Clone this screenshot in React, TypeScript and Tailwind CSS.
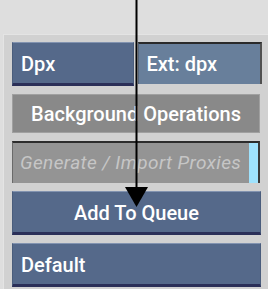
import React from "react";

const font = { fontFamily: 'Roboto, "Liberation Sans", Arial, sans-serif' };

function BlueButton({ label, center }: { label: string; center?: boolean }) {
  return (
    <div
      className={`h-[44px] bg-[#55698a] border-t border-t-[#8293b0] border-b-[3px] border-b-[#2b2f58] border-x border-x-[#4a5d7c] flex items-center pt-[1px] text-white font-medium text-[20px] ${
        center ? "justify-center" : "pl-[8px]"
      }`}
    >
      {label}
    </div>
  );
}

export default function App() {
  return (
    <div className="relative w-[268px] h-[289px] bg-[#dedede] overflow-hidden" style={font}>
      <div className="pt-[34px]">
        <div className="ml-[3px] h-[255px] bg-[#d1d1d1] border-l border-t border-[#e4e4e4] pl-[8px] pr-[6px] pt-[7px] flex flex-col gap-[8px]">
          <div className="flex gap-[4px] items-start">
            <div className="w-[123px]">
              <BlueButton label="Dpx" />
            </div>
            <div className="w-[124px] h-[42px] bg-[#687f9b] border-t-[2px] border-t-[#2a2a2a] border-r-[2px] border-r-[#505050] border-l border-l-[#55657a] flex items-center pl-[7px] text-white font-medium text-[20px]">
              Ext: dpx
            </div>
          </div>
          <div className="w-[248px] h-[39px] bg-[#898989] border border-[#a0a0a0] flex items-center justify-center text-white font-medium text-[20px]">
            Background Operations
          </div>
          <div className="w-[248px] h-[42px] bg-[#949494] border-t-[2px] border-t-[#2c2c2c] border-l border-l-[#6a6a6a] border-r-[2px] border-r-[#3a3a3a] flex">
            <div className="flex-1 flex items-center pl-[7px] italic text-[19px] tracking-[0.4px] text-[#c6c6c6] whitespace-nowrap overflow-hidden">
              Generate / Import Proxies
            </div>
            <div className="w-[9px] bg-[#9fe2fd]" />
          </div>
          <div className="w-[249px]">
            <BlueButton label="Add To Queue" center />
          </div>
          <div className="w-[249px]">
            <BlueButton label="Default" />
          </div>
        </div>
      </div>
      <svg className="absolute left-0 top-0" width="268" height="289">
        <line x1="136.5" y1="0" x2="136.5" y2="190" stroke="#000" strokeWidth="2" />
        <polygon points="125,187 148,187 136.5,207" fill="#000" />
      </svg>
    </div>
  );
}
